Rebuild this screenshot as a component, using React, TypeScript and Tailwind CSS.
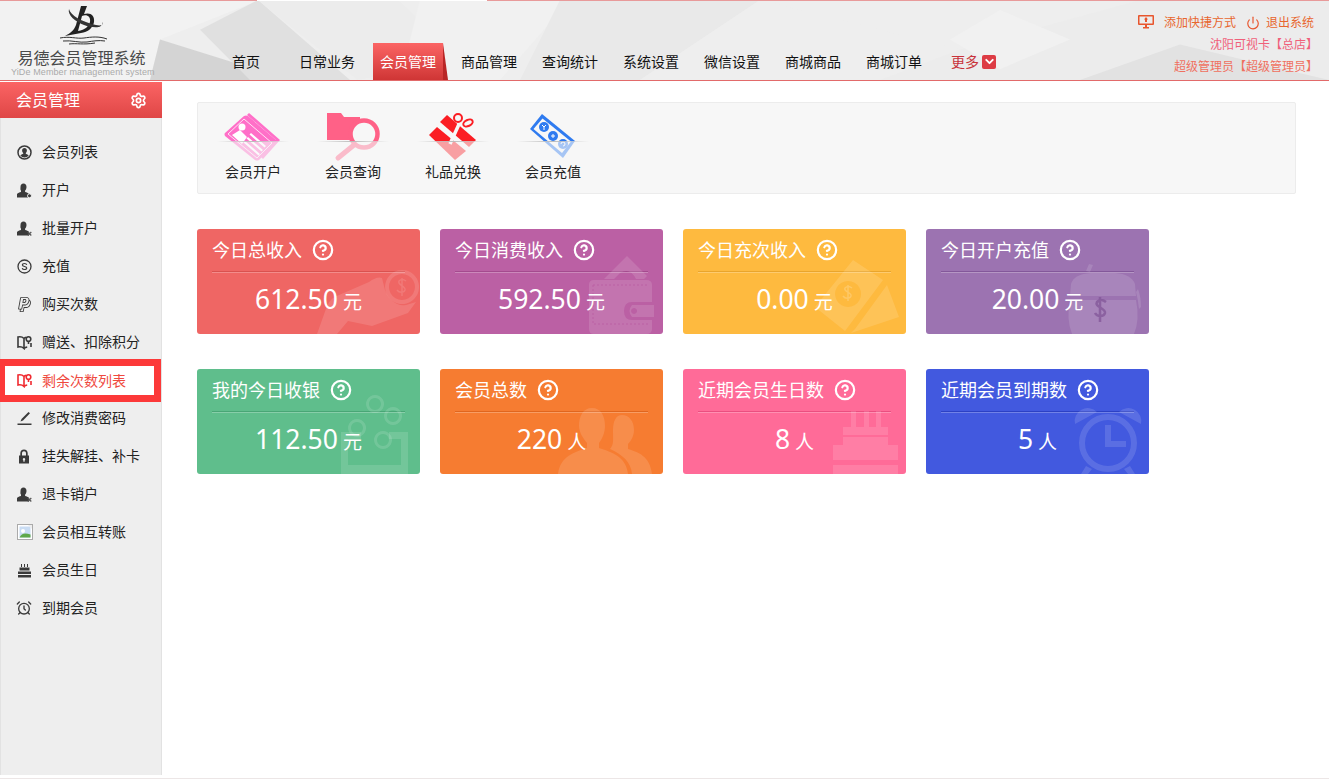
import type { ReactNode } from "react";
import { AlarmClock, ChevronDown, CircleHelp, Power, Settings } from "lucide-react";
import { SlPaypal } from "react-icons/sl";

const NAV = ["首页", "日常业务", "会员管理", "商品管理", "查询统计", "系统设置", "微信设置", "商城商品", "商城订单"];

const UserIcon = ({ mark }: { mark?: "dot" | "x" }) => (
  <svg width="15" height="15" viewBox="0 0 15 15" fill="#3a3a3a">
    <path d="M6.500 0.500c1.900 0 3 1.400 3 3.400 0 1.500-.6 2.800-1.400 3.600v1.500c1.500.4 3 1 4 2v3.500H0v-3.500c1-1 2.500-1.600 4-2V7.500C3.200 6.700 3.500 5.400 3.500 3.900c0-2 1.100-3.400 3-3.400z" />
    {mark === "dot" && <circle cx="12.500" cy="12.800" r="2" stroke="#eee" />}
    {mark === "x" && <path d="M10.800 11l3.500 3.500m0-3.500l-3.500 3.500" stroke="#555" strokeWidth="1.200" />}
  </svg>
);

const MapIcon = ({ color }: { color: string }) => (
  <svg width="15" height="15" viewBox="0 0 15 15" fill="none" stroke={color} strokeWidth="1.600">
    <path d="M7 3.500C5.500 2 3.500 1.500 1 2v10c2.500-.5 4.500 0 6 1.500zM7 3.500c.6-.6 1.200-1 2-1.300M7 13.500c1-.9 2-1.300 3.200-1.500M14 8v4" />
    <circle cx="11.500" cy="4" r="2.300" />
    <path d="M11.500 6.500v2.500" />
  </svg>
);

const SIDE: { label: string; icon: ReactNode; active?: boolean }[] = [
  {
    label: "会员列表",
    icon: (
      <svg width="15" height="15" viewBox="0 0 15 15">
        <circle cx="7.500" cy="7.500" r="6.500" fill="none" stroke="#3a3a3a" strokeWidth="1.500" />
        <path d="M7.500 3c1.500 0 2.400 1 2.400 2.500 0 1-.5 2-1.100 2.500v.8c1.200.4 2.200.9 2.900 1.700a5.500 5.500 0 0 1-8.400 0c.7-.8 1.700-1.300 2.900-1.700V8c-.6-.5-1.100-1.500-1.100-2.500C5.100 4 6 3 7.500 3z" fill="#3a3a3a" />
      </svg>
    ),
  },
  { label: "开户", icon: <UserIcon mark="dot" /> },
  { label: "批量开户", icon: <UserIcon mark="x" /> },
  {
    label: "充值",
    icon: (
      <svg width="15" height="15" viewBox="0 0 15 15" fill="none" stroke="#3a3a3a">
        <circle cx="7.500" cy="7.500" r="6.500" strokeWidth="1.300" />
        <path d="M9.700 5.800C9.500 4.900 8.600 4.500 7.500 4.500c-1.200 0-2.100.6-2.100 1.500 0 2 4.300 1 4.300 3 0 .9-.9 1.500-2.200 1.500-1.200 0-2.100-.5-2.300-1.400" strokeWidth="1.200" />
      </svg>
    ),
  },
  { label: "购买次数", icon: <SlPaypal size={15} color="#3a3a3a" /> },
  { label: "赠送、扣除积分", icon: <MapIcon color="#3a3a3a" /> },
  { label: "剩余次数列表", icon: <MapIcon color="#f02a30" />, active: true },
  {
    label: "修改消费密码",
    icon: (
      <svg width="15" height="15" viewBox="0 0 15 15" fill="#3a3a3a">
        <path d="M11.500 1l1.500 1.200L6 9.500l-2.500 1 1-2.400z" />
        <rect x="0.500" y="12.500" width="14" height="1.500" />
      </svg>
    ),
  },
  {
    label: "挂失解挂、补卡",
    icon: (
      <svg width="15" height="15" viewBox="0 0 15 15" fill="#3a3a3a">
        <path fillRule="evenodd" d="M7 0.500c2.300 0 3.700 1.600 3.700 3.800V6.500h1.300v8H2v-8h1.300V4.300C3.300 2.100 4.700.5 7 .5zm0 1.700c-1.200 0-2 .9-2 2.200v2.100h4V4.400c0-1.300-.8-2.200-2-2.200zM7 9a1.300 1.300 0 0 0-.6 2.400v1.300h1.200v-1.300A1.300 1.300 0 0 0 7 9z" />
      </svg>
    ),
  },
  { label: "退卡销户", icon: <UserIcon mark="x" /> },
  {
    label: "会员相互转账",
    icon: (
      <svg width="16" height="16" viewBox="0 0 16 16">
        <rect x="0.500" y="0.500" width="15" height="15" fill="#fff" stroke="#aaa" />
        <rect x="2.500" y="2.500" width="11" height="11" fill="#c9dcf3" />
        <path d="M2.500 13.500c2-4 5-5 11-3v3z" fill="#5fa84a" />
        <circle cx="6" cy="7" r="2" fill="#fff" />
        <path d="M11 1h4v4z" fill="#eee" />
      </svg>
    ),
  },
  {
    label: "会员生日",
    icon: (
      <svg width="15" height="15" viewBox="0 0 15 15" fill="#3a3a3a">
        <path d="M4 1h1v3H4zm3 0h1v3H7zm3 0h1v3h-1z" />
        <path d="M2.500 4.500h10v3h-10zM1 8.500h13V11H1zM1 12h13v2.500H1z" />
      </svg>
    ),
  },
  { label: "到期会员", icon: <AlarmClock size={16} color="#3a3a3a" strokeWidth={2} className="-ml-px" /> },
];

const ToolIcon = ({ children }: { children: ReactNode }) => (
  <svg width="60" height="60" viewBox="0 0 60 60">
    {children}
  </svg>
);

const TOOLS: { label: string; icon: ReactNode }[] = [
  {
    label: "会员开户",
    icon: (
      <ToolIcon>
        <path d="M26 5l31 27-17 19-2-2 15-17L24 7z" fill="#ff6fc8" />
        <path d="M2 25L21 8q2-1 4 0l28 24q1 2 0 3L36 52q-2 1-4 0L2 28q-1-2 0-3z" fill="#ff6fc8" />
        <path d="M5 26L21 11l28 24-15 15z" fill="none" stroke="#fff" strokeWidth="0.800" />
        <circle cx="19" cy="19" r="3.500" fill="#fff" />
        <path d="M9 27l8-5 7 7-5 7zM28 25l15 13-1.500 1.500-15-13zM25 29l15 13-1.500 1.500-15-13zM22 33l15 13-1.500 1.500-15-13z" fill="#fff" />
      </ToolIcon>
    ),
  },
  {
    label: "会员查询",
    icon: (
      <ToolIcon>
        <g transform="translate(-2 0)">
          <path d="M6 5h14l3 4h16v5a17 17 0 0 0-10 18H6z" fill="#ff6187" />
          <circle cx="43" cy="26" r="13.500" fill="none" stroke="#ff6187" strokeWidth="4.500" />
          <path d="M33 37L17 50" stroke="#ff6187" strokeWidth="5" strokeLinecap="round" />
        </g>
      </ToolIcon>
    ),
  },
  {
    label: "礼品兑换",
    icon: (
      <ToolIcon>
        <path d="M17 14l7-7 29 25-7 7z" fill="#fb1d23" />
        <path d="M14 19l29 24-11 9L6 27z" fill="#fb1d23" />
        <path d="M37 14L27 36" stroke="#f7f7f7" strokeWidth="3.500" />
        <circle cx="35" cy="10" r="4" fill="none" stroke="#fb1d23" strokeWidth="2" />
        <ellipse cx="45" cy="15" rx="5" ry="3" fill="none" stroke="#fb1d23" strokeWidth="2" transform="rotate(-25 45 15)" />
      </ToolIcon>
    ),
  },
  {
    label: "会员充值",
    icon: (
      <ToolIcon>
        <path d="M7 21L19 6l33 27-12 17z" fill="#2f7bf0" />
        <path d="M10.500 21l9-10.500 28.500 23-9 11.500z" fill="#f7f7f7" />
        <circle cx="21" cy="19" r="5" fill="#2f7bf0" />
        <circle cx="30" cy="28" r="5" fill="#2f7bf0" />
        <circle cx="40" cy="36" r="5" fill="#2f7bf0" />
        <path d="M19 17l2 2 2-2m-2 2v3M28 28h4M30 26v4M38 36a2 2 0 1 1 2 2" fill="none" stroke="#fff" strokeWidth="1" />
      </ToolIcon>
    ),
  },
];

const Mark = ({ children }: { children: ReactNode }) => (
  <svg className="absolute inset-0 h-full w-full" viewBox="0 0 223 105" fill="#fff" fillOpacity="0.13">
    {children}
  </svg>
);

const CARDS: { title: string; value: string; unit: string; bg: string; line: string; mark: ReactNode }[] = [
  {
    title: "今日总收入",
    value: "612.50",
    unit: "元",
    bg: "bg-[#ef6664]",
    line: "border-[#d9524f]",
    mark: (
      <Mark>
        <path fillRule="evenodd" d="M205 41a17 17 0 1 0 .1 0zm0 4a13 13 0 1 1-.1 0z" />
        <path d="M120 105l10-28q3-8 12-11l30-13q8-6 13-4l3 12c3 9 12 17 21 15l10-3-8 11-36 13-24-5-11 13z" />
        <path d="M205 49v18M209 52q-4-3-7 0c-2 4 7 5 6 9-1 3-6 3-8 0" fill="none" stroke="#fff" strokeOpacity="0.13" strokeWidth="1.500" />
      </Mark>
    ),
  },
  {
    title: "今日消费收入",
    value: "592.50",
    unit: "元",
    bg: "bg-[#bb60a4]",
    line: "border-[#a44b8e]",
    mark: (
      <Mark>
        <path d="M164 50l23-23 20 20-3 3h-8q-6-12-16-6l-6 6z" />
        <path d="M149 56q0-5 5-5h52q6 0 6 5v17h-20q-8 0-8 9t8 9h20v9q0 5-6 5h-52q-5 0-5-5z" />
        <path d="M153 56h55M208 95h-55V56" fill="none" stroke="#bb60a4" strokeDasharray="2 2" />
        <path fillRule="evenodd" d="M192 76h22v12h-22q-5-6 0-12zm2 3a3 3 0 1 0 .1 0z" />
      </Mark>
    ),
  },
  {
    title: "今日充次收入",
    value: "0.00",
    unit: "元",
    bg: "bg-[#feba3f]",
    line: "border-[#e9a52c]",
    mark: (
      <Mark>
        <path d="M172 100l32-44 12 32-48 16z" />
        <path fillRule="evenodd" d="M132 78L170 31l30 20-38 51zm33-26a13 13 0 1 0 .1 0z" />
        <path d="M165 56v16M169 59q-4-3-7 0c-2 4 7 4 6 8-1 3-6 3-8 0" fill="none" stroke="#fff" strokeOpacity="0.2" strokeWidth="1.500" />
      </Mark>
    ),
  },
  {
    title: "今日开户充值",
    value: "20.00",
    unit: "元",
    bg: "bg-[#9c73b1]",
    line: "border-[#83589a]",
    mark: (
      <Mark>
        <path d="M145 55q3-10 20-11h24q16 1 20 11l1 12h-66z" />
        <path d="M144 71h66q4 20-2 34h-62q-6-15-2-34z" />
        <path d="M160 42l3-7 4 1-3 7zM212 60q3 8 3 18l-2 2q-1-10-3-17z" />
        <path d="M174 68v25M180 73q-5-4-9 0c-3 5 9 6 8 11-1 4-8 4-10 0" fill="none" stroke="#83589a" strokeOpacity="0.8" strokeWidth="2.500" />
      </Mark>
    ),
  },
  {
    title: "我的今日收银",
    value: "112.50",
    unit: "元",
    bg: "bg-[#5fbe8c]",
    line: "border-[#49a676]",
    mark: (
      <Mark>
        <path fillRule="evenodd" d="M178 26a9 9 0 1 0 .1 0zm0 3a6 6 0 1 1-.1 0z" />
        <path fillRule="evenodd" d="M196 38a9 9 0 1 0 .1 0zm0 3a6 6 0 1 1-.1 0z" />
        <path fillRule="evenodd" d="M160 50a9 9 0 1 0 .1 0zm0 3a6 6 0 1 1-.1 0z" />
        <path fillRule="evenodd" d="M186 62a9 9 0 1 0 .1 0zm0 3a6 6 0 1 1-.1 0z" />
        <path d="M144 63h20v7h-13v26h53V70h-12v-7h19v42h-67z" />
      </Mark>
    ),
  },
  {
    title: "会员总数",
    value: "220",
    unit: "人",
    bg: "bg-[#f67c31]",
    line: "border-[#e0661e]",
    mark: (
      <Mark>
        <path d="M152 39c9 0 13 8 13 18 0 7-3 13-6 17v5c12 4 27 8 29 26h-70c2-18 17-22 29-26v-5c-3-4-8-10-8-17 0-10 4-18 13-18z" />
        <path d="M182 46c7 0 12 6 12 15 0 6-3 11-6 14v5c10 3 22 7 24 25h-20c-1-12-9-19-22-25 4-5 3-8 3-19 0-9 3-15 9-15z" />
      </Mark>
    ),
  },
  {
    title: "近期会员生日数",
    value: "8",
    unit: "人",
    bg: "bg-[#ff6b98]",
    line: "border-[#ea4f80]",
    mark: (
      <Mark>
        <path d="M168 42h5v16h-5zM181 42h5v16h-5zM193 42h5v16h-5z" />
        <path d="M160 58h45v18h-45zM150 76h65v15h-65zM150 96h65v9h-65z" />
        <path d="M160 67h45" stroke="#ff6b98" strokeWidth="2" />
      </Mark>
    ),
  },
  {
    title: "近期会员到期数",
    value: "5",
    unit: "人",
    bg: "bg-[#4259df]",
    line: "border-[#2c41c4]",
    mark: (
      <Mark>
        <circle cx="182" cy="74" r="26" fill="none" stroke="#fff" strokeOpacity="0.13" strokeWidth="6" />
        <path d="M149 55a13 13 0 0 1 22-12zM193 43a13 13 0 0 1 22 12zM179 56h6v16h15v6h-21zM160 97l-5 8h7l4-5zM204 97l5 8h-7l-4-5z" />
      </Mark>
    ),
  },
];

const Logo = () => (
  <svg width="56" height="40" viewBox="0 0 56 40" className="mx-auto block">
    <path fillRule="evenodd" d="M27 1h6l-3 8c6-2 11 1 10 8-1 6-6 10-13 11l-16 3c6-3 9-6 11-11zm1 10l-4 15c7-1 11-5 12-9 1-5-3-8-8-6z" fill="#222" />
    <path d="M15 4c1 6 13 13 27 16 5 1 8 0 6-3 2 7-10 6-18 3C22 17 13 10 15 4z" fill="#333" />
    <path d="M6 33c10-2 16 1 24 0 7-1 15-2 23 1M9 36c9-1 16 2 24 1 6-1 12-2 18-1M15 39c8-1 14 1 26-1" fill="none" stroke="#333" strokeWidth="1" />
  </svg>
);

const HeaderBg = () => (
  <svg className="absolute inset-0 -z-10 h-full w-full" viewBox="0 0 1329 81" preserveAspectRatio="none">
    <rect width="1329" height="81" fill="#eeeeee" />
    <path d="M0 0h260L160 40 150 81H0z" fill="#f2f2f2" />
    <path d="M160 40L290 81H150z" fill="#d4d4d4" />
    <path d="M258 0L350 81H250L200 30z" fill="#e0e0e0" />
    <path d="M258 0h140l60 60-100 21z" fill="#ececec" />
    <path d="M420 0h150L500 81H400z" fill="#f1f1f1" />
    <path d="M560 0h200l-120 81H520z" fill="#e9e9e9" />
    <path d="M760 0L960 50 880 81H640z" fill="#eeeeee" />
    <path d="M960 50L1140 0h189v81H880z" fill="#ececec" />
    <path d="M1080 81L1180 45l149 36z" fill="#e2e2e2" />
    <path d="M1000 10l70 30-70 30-50-30z" fill="#f1f1f1" />
  </svg>
);

function Header() {
  return (
    <header className="relative isolate flex h-[81px] shrink-0 border-b border-[#e26a6a]">
      <HeaderBg />
      <div className="absolute inset-x-0 top-0 flex h-px">
        <div className="w-[257px] bg-[#e89a9a]" />
        <div className="w-[230px] bg-white" />
        <div className="flex-1 bg-[#e89a9a]" />
      </div>
      <div className="w-[211px] shrink-0 pt-[5px]">
        <div className="w-[163px]">
          <Logo />
          <p className="mt-[6px] text-center text-base leading-[15px] text-[#4a4a4a]">易德会员管理系统</p>
          <p className="mt-[1px] whitespace-nowrap pl-[11px] text-[9px] leading-[10px] tracking-[0.1px] text-[#aaa] [font-family:'Liberation_Sans',sans-serif]">YiDe Member management system</p>
        </div>
      </div>
      <nav className="flex items-end gap-[11px] text-sm">
        {NAV.map((item) =>
          item === "会员管理" ? (
            <div key={item} className="relative flex h-[37px] w-[70px] items-center justify-center bg-gradient-to-b from-[#fb6464] to-[#cf3535] text-white">
              {item}
              <span className="absolute left-full top-0 h-full w-[5px] bg-[#b92626] [clip-path:polygon(0_0,100%_100%,0_100%)]" />
            </div>
          ) : (
            <div key={item} className="flex h-[37px] w-[70px] items-center justify-center text-[#111]">
              {item}
            </div>
          ),
        )}
        <div className="flex h-[37px] w-[70px] items-center justify-center gap-[3px] pr-[3px] text-[#c8333a]">
          更多
          <span className="flex h-[14px] w-[14px] items-center justify-center rounded-[2px] bg-[#dd3c45]">
            <ChevronDown size={13} color="#fff" strokeWidth={3.500} />
          </span>
        </div>
      </nav>
      <div className="ml-auto pr-[15px] pt-[12px] text-right text-xs leading-[22px]">
        <div className="flex items-center justify-end text-[#e8662e]">
          <svg width="16" height="14" viewBox="0 0 16 14" className="-mt-[2px] mr-[10px]" fill="#e8552d">
            <path d="M1 0h14q1 0 1 1v8q0 1-1 1H1q-1 0-1-1V1q0-1 1-1zm.5 1.500v7h13v-7zM5 12h6v1.500H5zM7 10h2v2H7zM8 2l2 2.500H9V7H7V4.500H6z" />
          </svg>
          添加快捷方式
          <Power size={14} color="#e8552d" className="ml-[10px] mr-[6px]" strokeWidth={2} />
          退出系统
        </div>
        <p className="-mr-[4px] text-[#f0607a]">沈阳可视卡【总店】</p>
        <p className="-mr-[4px] text-[#f0705f]">超级管理员【超级管理员】</p>
      </div>
    </header>
  );
}

function Sidebar() {
  return (
    <aside className="mt-px h-[693px] w-[162px] shrink-0 border-l border-r border-[#e2e2e2] bg-[#eeeeee]">
      <div className="-ml-px flex h-[36px] w-[162px] items-center justify-between bg-gradient-to-b from-[#fb6464] to-[#df4646] pl-[16px] pr-[15px] text-base text-white">
        会员管理
        <Settings size={17} color="#fff" strokeWidth={2.400} />
      </div>
      <ul className="pt-[15px] text-sm text-[#222]">
        {SIDE.map((item) =>
          item.active ? (
            <li key={item.label} className="-mb-[3px] -ml-px -mt-[2px] flex h-[43px] w-[161px] items-center border-y-[7px] border-l-[5px] border-r-[7px] border-[#fc3939] bg-white pl-[12px] text-[#ef4a3f]">
              <span className="flex w-[25px]">{item.icon}</span>
              {item.label}
            </li>
          ) : (
            <li key={item.label} className="flex h-[38px] items-center pl-[16px]">
              <span className="flex w-[25px]">{item.icon}</span>
              {item.label}
            </li>
          ),
        )}
      </ul>
    </aside>
  );
}

function Toolbar() {
  return (
    <div className="flex h-[92px] w-[1099px] rounded-[2px] border border-[#ececec] bg-[#f7f7f7] pl-[5px] pt-[5px]">
      {TOOLS.map((tool) => (
        <div key={tool.label} className="relative flex w-[100px] flex-col items-center">
          {tool.icon}
          <div className="absolute left-[5px] top-[33px] h-[21px] w-[90px] bg-[#f6f6f6]/60" />
          <div className="absolute left-[14px] top-[33px] h-px w-[72px] bg-gradient-to-r from-transparent via-[#bbbbbb] to-transparent" />
          <p className="-mt-[5px] text-sm leading-[18px] text-[#222]">{tool.label}</p>
        </div>
      ))}
    </div>
  );
}

function StatCard({ title, value, unit, bg, line, mark }: (typeof CARDS)[number]) {
  return (
    <div className={`relative h-[105px] w-[223px] overflow-hidden rounded-[3px] text-white ${bg}`}>
      {mark}
      <div className="relative mx-[15px] flex h-[42px] items-center gap-[10px] text-lg leading-none">
        {title}
        <CircleHelp size={22} strokeWidth={2.400} />
      </div>
      <div className={`mx-[15px] border-t ${line}`} />
      <div className="relative mx-[15px] border-t border-white/25" />
      <p className="relative mt-[3px] flex items-baseline justify-center gap-[5px] text-[26.5px] leading-[46px]">
        {value}
        <span className="text-[19px]">{unit}</span>
      </p>
    </div>
  );
}

export default function App() {
  return (
    <div className="flex h-[779px] flex-col overflow-hidden bg-white [font-family:'Noto_Sans','Noto_Sans_CJK_SC',sans-serif]">
      <Header />
      <div className="flex">
        <Sidebar />
        <main className="pl-[35px] pt-[21px]">
          <Toolbar />
          <div className="mt-[35px] grid w-[952px] grid-cols-[repeat(4,223px)] gap-x-[20px] gap-y-[35px]">
            {CARDS.map((card) => (
              <StatCard key={card.title} {...card} />
            ))}
          </div>
        </main>
      </div>
      <div className="mt-auto h-px bg-[#ece6e6]" />
    </div>
  );
}
